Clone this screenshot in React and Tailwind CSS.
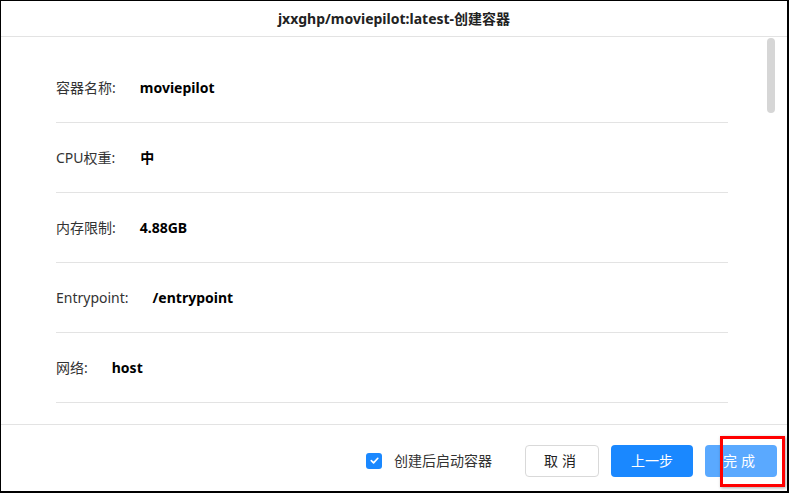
const rows = [
  { label: '容器名称:', value: 'moviepilot', gap: 'ml-[24px]' },
  { label: 'CPU权重:', value: '中', gap: 'ml-[25px]' },
  { label: '内存限制:', value: '4.88GB', gap: 'ml-[24px]' },
  { label: 'Entrypoint:', value: '/entrypoint', gap: 'ml-[24px]' },
  { label: '网络:', value: 'host', gap: 'ml-[24px]' },
];

export default function App() {
  return (
    <div
      className="w-[789px] h-[493px] bg-white border-t border-l border-r-2 border-b-2 border-black flex flex-col overflow-hidden"
      style={{ fontFamily: '"Noto Sans", "Noto Sans CJK SC", sans-serif' }}
    >
      <div className="h-[36px] shrink-0 flex items-center justify-center border-b border-[#e3e3e3] text-[14px] font-bold text-[#222]">
        jxxghp/moviepilot:latest-创建容器
      </div>
      <div className="flex-1 flex relative min-h-0">
        <div className="flex-1 pl-[55px] pr-[59px] pt-[16px]">
          {rows.map((row) => (
            <div
              key={row.label}
              className="h-[70px] flex items-center border-b border-[#e3e3e3] text-[14px]"
            >
              <span className="text-[#333]">{row.label}</span>
              <span className={`${row.gap} font-bold text-black`}>{row.value}</span>
            </div>
          ))}
        </div>
        <div className="absolute right-[12px] top-[1px] w-[8px] h-[75px] rounded-full bg-[#d6d6d6]" />
      </div>
      <div className="h-[67px] shrink-0 border-t border-[#e3e3e3] flex items-center justify-end pr-[10px] pt-[5px] text-[14px]">
        <label className="flex items-center mr-[33px]">
          <span className="w-[16px] h-[16px] rounded-[3px] bg-[#1a88ff] flex items-center justify-center">
            <svg width="11" height="11" viewBox="0 0 12 12" fill="none">
              <path d="M2.5 6.2 L5 8.6 L9.6 3.6" stroke="white" strokeWidth="1.8" strokeLinecap="round" strokeLinejoin="round" />
            </svg>
          </span>
          <span className="ml-[12px] text-[#333]">创建后启动容器</span>
        </label>
        <button className="w-[74px] h-[32px] rounded-[4px] border border-[#d9d9d9] bg-white text-[#222] tracking-[4px]">
          取消
        </button>
        <button className="ml-[12px] w-[82px] h-[32px] rounded-[4px] bg-[#1a88ff] text-white">
          上一步
        </button>
        <div className="relative ml-[12px]">
          <button className="w-[72px] h-[32px] rounded-[4px] bg-[#5aa9ff] text-white tracking-[4px]">
            完成
          </button>
          <div className="absolute left-[15px] top-[-9px] w-[65px] h-[51px] border-[3px] border-[#ff0000] shadow-[1px_1px_3px_rgba(0,0,0,0.35)]" />
        </div>
      </div>
    </div>
  );
}
